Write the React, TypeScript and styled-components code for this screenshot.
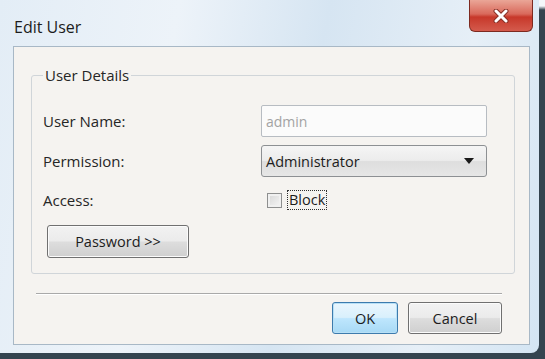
import React from 'react'
import styled, { createGlobalStyle } from 'styled-components'

const GlobalStyle = createGlobalStyle`
  html, body {
    margin: 0;
    padding: 0;
    background: #34444f;
    font-family: 'Open Sans', 'Noto Sans', 'Liberation Sans', sans-serif;
  }
`

const Screen = styled.div`
  width: 545px;
  height: 359px;
  overflow: hidden;
  background: linear-gradient(180deg, #f4f7fa 0px, #f4f7fa 6px, #34444f 10px);
`

const Window = styled.div`
  width: 539px;
  height: 353px;
  box-sizing: border-box;
  display: flex;
  flex-direction: column;
  padding: 0 9px 8px 13px;
  border-radius: 0 0 8px 0;
  background: linear-gradient(100deg, #e3edf6 0%, #edf3f9 30%, #d6e5f2 55%, #e6eff7 80%, #d4e5f3 100%);
`

const TitleBar = styled.div`
  height: 47px;
  display: flex;
  align-items: flex-start;
  justify-content: space-between;
`

const Title = styled.div`
  margin-top: 16px;
  padding-left: 1px;
  font-size: 16px;
  color: #1c1c1c;
`

const CloseButton = styled.button`
  width: 64px;
  height: 32px;
  margin-right: -3px;
  padding: 0;
  border: 1px solid #7d2a20;
  border-top: none;
  border-radius: 0 0 6px 6px;
  background: linear-gradient(180deg, #eaa697 0%, #d9695b 45%, #c7382a 55%, #d45b4d 100%);
  display: flex;
  align-items: center;
  justify-content: center;
`

const Client = styled.div`
  flex: 1;
  display: flex;
  flex-direction: column;
  box-sizing: border-box;
  padding: 18px 15px 10px 17px;
  background: #f5f3f0;
  border: 1px solid #a8b8c6;
`

const GroupBox = styled.fieldset`
  margin: 0;
  padding: 20px 27px 15px 11px;
  border: 1px solid #d0d5d9;
  border-radius: 3px;
  display: grid;
  grid-template-columns: 218px 226px;
  grid-template-rows: 32px 32px 30px auto;
  row-gap: 8px;
  align-items: center;
`

const Legend = styled.legend`
  margin-left: 0;
  padding: 0 2px;
  font-size: 15px;
  color: #262626;
`

const Label = styled.div`
  font-size: 15px;
  color: #262626;
`

const TextBox = styled.div`
  height: 32px;
  box-sizing: border-box;
  border: 1px solid #b7bcc2;
  border-radius: 2px;
  background: #fbfbfb;
  padding: 0 4px;
  display: flex;
  align-items: center;
  font-size: 14px;
  color: #a3a3a3;
`

const Select = styled.div`
  height: 32px;
  box-sizing: border-box;
  border: 1px solid #8d9093;
  border-radius: 3px;
  background: linear-gradient(180deg, #f5f5f5 0%, #ececec 48%, #dedede 52%, #e6e6e6 100%);
  padding: 0 12px 0 4px;
  display: flex;
  align-items: center;
  justify-content: space-between;
  font-size: 14.5px;
  color: #1c1c1c;
`

const Arrow = styled.span`
  width: 0;
  height: 0;
  border-left: 5px solid transparent;
  border-right: 5px solid transparent;
  border-top: 6px solid #1a1a1a;
`

const CheckRow = styled.div`
  display: flex;
  align-items: center;
  gap: 6px;
  padding-left: 6px;
`

const CheckBox = styled.span`
  width: 15px;
  height: 15px;
  box-sizing: border-box;
  border: 1px solid #8e8f8f;
  background: linear-gradient(135deg, #d6d6d6 0%, #f6f6f6 100%);
  box-shadow: inset 0 0 0 2px #f0f0f0;
`

const CheckLabel = styled.span`
  font-size: 14.5px;
  color: #1c1c1c;
  line-height: 18px;
  outline: 1px dotted #303030;
  padding: 0 1px;
`

const Button = styled.button<{ $primary?: boolean; $width: number }>`
  width: ${p => p.$width}px;
  height: 32px;
  box-sizing: border-box;
  border: 1px solid ${p => (p.$primary ? '#3d7bad' : '#707070')};
  border-radius: 3px;
  background: ${p =>
    p.$primary
      ? 'linear-gradient(180deg, #eaf6fd 0%, #d9f0fc 48%, #bee6fd 52%, #a7d9f5 100%)'
      : 'linear-gradient(180deg, #f2f2f2 0%, #ebebeb 48%, #dddddd 52%, #cfcfcf 100%)'};
  box-shadow: inset 0 0 0 1px ${p => (p.$primary ? '#b8e0f6' : '#fbfbfb')};
  font-family: inherit;
  font-size: 14.5px;
  color: #1c1c1c;
  padding: 0;
`

const PasswordButton = styled(Button)`
  margin-left: 4px;
  margin-top: 2px;
  height: 33px;
`

const Separator = styled.div`
  margin: 19px 12px 0 5px;
  height: 1px;
  background: #a9a9a9;
  border-bottom: 1px solid #ffffff;
`

const Footer = styled.div`
  display: flex;
  justify-content: flex-end;
  gap: 10px;
  margin: 7px 12px 0 0;
`

export default function App() {
  return (
    <>
      <GlobalStyle />
      <Screen>
        <Window>
          <TitleBar>
            <Title>Edit User</Title>
            <CloseButton aria-label="Close">
              <svg width="16" height="14" viewBox="0 0 16 14">
                <path d="M3 2 L13 12 M13 2 L3 12" stroke="#8a3026" strokeWidth="5" strokeLinecap="round" />
                <path d="M3 2 L13 12 M13 2 L3 12" stroke="#ffffff" strokeWidth="3" strokeLinecap="round" />
              </svg>
            </CloseButton>
          </TitleBar>
          <Client>
            <GroupBox>
              <Legend>User Details</Legend>
              <Label>User Name:</Label>
              <TextBox>admin</TextBox>
              <Label>Permission:</Label>
              <Select>
                Administrator
                <Arrow />
              </Select>
              <Label>Access:</Label>
              <CheckRow>
                <CheckBox />
                <CheckLabel>Block</CheckLabel>
              </CheckRow>
              <PasswordButton $width={142}>Password &gt;&gt;</PasswordButton>
            </GroupBox>
            <Separator />
            <Footer>
              <Button $primary $width={66}>OK</Button>
              <Button $width={94}>Cancel</Button>
            </Footer>
          </Client>
        </Window>
      </Screen>
    </>
  )
}
